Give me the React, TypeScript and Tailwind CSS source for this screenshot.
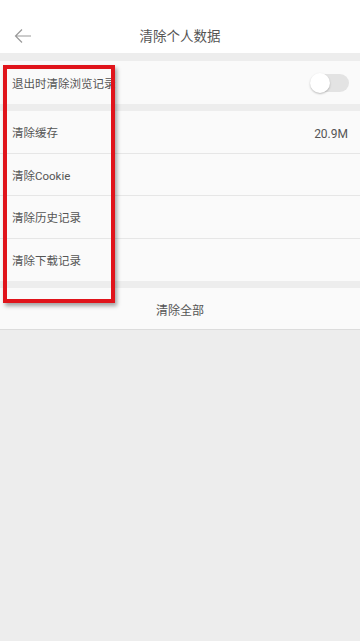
const font = { fontFamily: 'Roboto, "Noto Sans CJK SC", sans-serif' };

function Row({ label, value, h, last }: { label: string; value?: string; h: string; last?: boolean }) {
  return (
    <div className={`flex ${h} items-center justify-between bg-[#fafafa] pl-[12px] pr-[12px] pt-[4px] ${last ? "" : "border-b border-[#e6e6e6]"}`}>
      <span className="text-[11.5px] text-[#555]">{label}</span>
      {value && <span className="text-[12px] text-[#555]">{value}</span>}
    </div>
  );
}

export default function App() {
  return (
    <div className="relative min-h-[641px] w-[360px] bg-[#ededed]" style={font}>
      <header className="relative flex h-[53px] items-end justify-center bg-white pb-[7px]">
        <svg className="absolute left-[14px] top-[28px]" width="18" height="16" viewBox="0 0 18 16" fill="none" stroke="#9a9a9a" strokeWidth="1.2">
          <path d="M17 8H1.5M8 1.5L1.5 8L8 14.5" />
        </svg>
        <span className="text-[13.5px] text-[#555]">清除个人数据</span>
      </header>

      <div className="h-[8px]" />
      <div className="flex h-[43px] items-center justify-between bg-[#fafafa] pl-[12px] pr-[11px]">
        <span className="pt-[4px] text-[11.5px] text-[#555]">退出时清除浏览记录</span>
        <div className="relative h-[18px] w-[38px] rounded-full bg-[#e3e3e3]">
          <div className="absolute -left-[1px] -top-[1px] h-[20px] w-[20px] rounded-full bg-white shadow-[0_1px_2px_rgba(0,0,0,0.25)]" />
        </div>
      </div>

      <div className="h-[7px]" />
      <Row label="清除缓存" value="20.9M" h="h-[43px]" />
      <Row label="清除Cookie" h="h-[42px]" />
      <Row label="清除历史记录" h="h-[43px]" />
      <Row label="清除下载记录" h="h-[42px]" last />

      <div className="h-[7px]" />
      <div className="flex h-[42px] items-center justify-center border-b border-[#dcdcdc] bg-[#fafafa] pt-[4px]">
        <span className="text-[12px] text-[#555]">清除全部</span>
      </div>

      <div className="pointer-events-none absolute left-[3px] top-[65px] h-[238px] w-[112px] border-[4px] border-[#e0141b] shadow-[2px_3px_4px_rgba(0,0,0,0.35)]" />
    </div>
  );
}
